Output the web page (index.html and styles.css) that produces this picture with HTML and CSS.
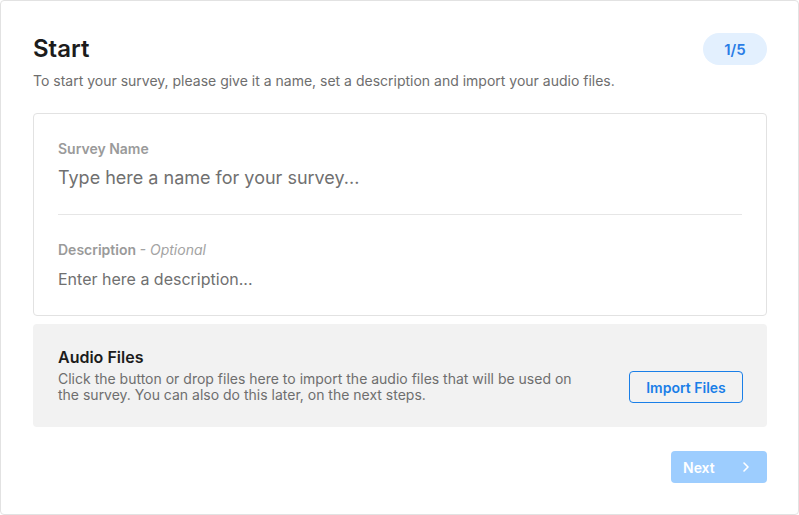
FILE: index.html
```html
<!DOCTYPE html>
<html lang="en">
<head>
<meta charset="utf-8">
<title>Start</title>
<link rel="stylesheet" href="styles.css">
</head>
<body>
<div class="page">
  <header class="header">
    <h1 class="title">Start</h1>
    <span class="badge">1/5</span>
  </header>
  <p class="subtitle">To start your survey, please give it a name, set a description and import your audio files.</p>

  <section class="card">
    <div class="field">
      <label class="label">Survey Name</label>
      <div class="input name-input">Type here a name for your survey...</div>
    </div>
    <div class="divider"></div>
    <div class="field">
      <label class="label">Description <span class="optional">- Optional</span></label>
      <div class="input desc-input">Enter here a description...</div>
    </div>
  </section>

  <section class="audio">
    <div class="audio-text">
      <h2 class="audio-title">Audio Files</h2>
      <p class="audio-desc">Click the button or drop files here to import the audio files that will be used on the survey. You can also do this later, on the next steps.</p>
    </div>
    <button class="import-btn">Import Files</button>
  </section>

  <footer class="footer">
    <button class="next-btn"><span>Next</span>
      <svg class="chev" width="8" height="12" viewBox="0 0 8 12"><path d="M2 2l4 4-4 4" fill="none" stroke="#fff" stroke-width="1.6" stroke-linecap="round" stroke-linejoin="round"/></svg>
    </button>
  </footer>
</div>
</body>
</html>
```

FILE: styles.css
```css
* { box-sizing: border-box; }
html, body { margin: 0; padding: 0; background: #fff; }
body { font-family: Inter, "Noto Sans", sans-serif; }

.page {
  width: 799px;
  height: 515px;
  border: 1px solid #e2e2e2;
  border-radius: 4px;
  padding: 32px 31px 32px 32px;
}

.header {
  display: flex;
  justify-content: space-between;
  align-items: center;
  height: 32px;
}

.title {
  margin: 0;
  font-size: 24px;
  font-weight: 600;
  color: #1c1c1c;
  line-height: 32px;
}

.badge {
  width: 64px;
  height: 32px;
  border-radius: 16px;
  background: #e3f0fe;
  color: #2a7de6;
  font-size: 15px;
  font-weight: 600;
  display: flex;
  align-items: center;
  justify-content: center;
}

.subtitle {
  margin: 6px 0 0;
  font-size: 14px;
  line-height: 20px;
  color: #6e6e6e;
}

.card {
  margin-top: 22px;
  border: 1px solid #e2e2e2;
  border-radius: 4px;
  padding: 0 24px;
}

.field {
  padding: 26px 0 24px;
  display: flex;
  flex-direction: column;
  gap: 8px;
}

.label {
  font-size: 14px;
  line-height: 18px;
  font-weight: 600;
  color: #9a9a9a;
}

.optional {
  font-style: italic;
  font-weight: 400;
  color: #a3a3a3;
}

.input {
  color: #707070;
  line-height: 24px;
}
.name-input { font-size: 18px; }
.desc-input { font-size: 16px; }

.divider {
  height: 1px;
  background: #e6e6e6;
}

.audio {
  margin-top: 8px;
  background: #f2f2f2;
  border-radius: 4px;
  padding: 23px 24px 24px 25px;
  display: flex;
  align-items: flex-end;
  gap: 40px;
}

.audio-text { flex: 1; }

.audio-title {
  margin: 0;
  font-size: 16px;
  line-height: 20px;
  font-weight: 600;
  color: #1c1c1c;
}

.audio-desc {
  margin: 4px 0 0;
  font-size: 14px;
  line-height: 16px;
  color: #6e6e6e;
}

.import-btn {
  width: 114px;
  height: 32px;
  border: 1px solid #1a7fe8;
  border-radius: 4px;
  background: transparent;
  color: #1a7fe8;
  font-family: inherit;
  font-size: 14px;
  font-weight: 600;
  flex-shrink: 0;
}

.footer {
  margin-top: 24px;
  display: flex;
  justify-content: flex-end;
}

.next-btn {
  width: 96px;
  height: 32px;
  border: none;
  border-radius: 4px;
  background: #9dcdfe;
  color: #fff;
  font-family: inherit;
  font-size: 14px;
  font-weight: 600;
  display: flex;
  align-items: center;
  justify-content: space-between;
  padding: 0 17px 0 12px;
}
```
